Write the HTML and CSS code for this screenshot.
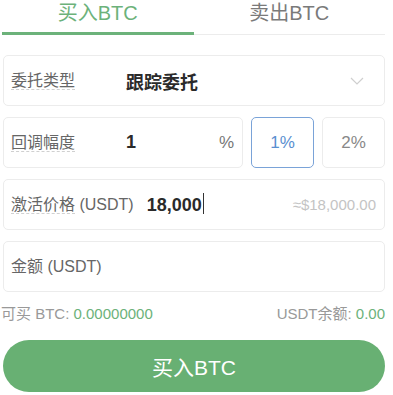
FILE: index.html
```html
<!DOCTYPE html>
<html>
<head>
    <title>跟踪委托 - 买入BTC</title>
    <link rel="stylesheet" href="styles.css">
</head>
<body>

    <div class="trade">
        <div class="tabs">
            <div class="tab active">买入BTC</div>
            <div class="tab">卖出BTC</div>
        </div>

        <div class="field select">
            <span class="label"><u>委托类型</u></span>
            <span class="value">跟踪委托</span>
            <svg class="chevron" width="14" height="8" viewBox="0 0 14 8">
                <path d="M1 1 L7 7 L13 1" fill="none" stroke="#cfcfcf" stroke-width="1.2"/>
            </svg>
        </div>

        <div class="row">
            <div class="field grow">
                <span class="label"><u>回调幅度</u></span>
                <span class="value">1</span>
                <span class="unit">%</span>
            </div>
            <div class="pct selected">1%</div>
            <div class="pct">2%</div>
        </div>

        <div class="field">
            <span class="label auto"><u>激活价格</u> (USDT)</span>
            <span class="value price">18,000<i class="cursor"></i></span>
            <span class="hint">≈$18,000.00</span>
        </div>

        <div class="field">
            <span class="label auto">金额 (USDT)</span>
        </div>

        <div class="info">
            <span>可买 BTC: <b>0.00000000</b></span>
            <span>USDT余额: <b>0.00</b></span>
        </div>

        <button class="buy-btn">买入BTC</button>
    </div>

</body>
</html>
```

FILE: styles.css
```css
body {
    margin: 0;
    padding: 0;
    background: #fff;
    font-family: "Liberation Sans", "Noto Sans CJK SC", sans-serif;
}
.trade {
    width: 382px;
    padding-left: 3px;
}
.tabs {
    display: flex;
    margin-left: -1px;
    height: 35px;
}
.tab {
    flex: 1;
    text-align: center;
    font-size: 20px;
    line-height: 26px;
    color: #7a7a7a;
    border-bottom: 1px solid #ececec;
    box-sizing: border-box;
}
.tab.active {
    color: #6cb27a;
    border-bottom: 3px solid #6cb27a;
}
.field {
    display: flex;
    align-items: center;
    height: 51px;
    margin-top: 11px;
    padding: 0 8px 0 7px;
    border: 1px solid #ececec;
    border-radius: 5px;
    box-sizing: border-box;
}
.select {
    margin-top: 20px;
}
.label {
    font-size: 16px;
    color: #666;
    width: 115px;
    line-height: 20px;
    flex: none;
}
.label.auto {
    width: auto;
}
.label u {
    text-decoration: none;
    border-bottom: 1px dashed #d0d0d0;
}
.value {
    font-size: 18px;
    font-weight: bold;
    color: #2a2a2a;
    flex: 1;
}
.chevron {
    margin-right: 12px;
}
.row {
    display: flex;
    gap: 8px;
    margin-top: 11px;
}
.row .field {
    margin-top: 0;
}
.grow {
    flex: 1;
}
.unit {
    font-size: 17px;
    color: #777;
}
.pct {
    width: 63px;
    height: 51px;
    line-height: 49px;
    text-align: center;
    font-size: 17px;
    color: #888;
    border: 1px solid #ececec;
    border-radius: 5px;
    box-sizing: border-box;
}
.pct.selected {
    color: #5a8fd0;
    border: 1px solid #7aa3d8;
}
.field .price {
    flex: 1;
    margin-left: 13px;
}
.cursor {
    display: inline-block;
    width: 1px;
    height: 21px;
    background: #333;
    vertical-align: -3px;
    margin-left: 1px;
}
.hint {
    font-size: 15px;
    color: #c4c4c4;
}
.info {
    display: flex;
    justify-content: space-between;
    margin-top: 10px;
    font-size: 15px;
    color: #999;
    margin-left: -2px;
}
.info b {
    font-weight: normal;
    color: #6cb27a;
}
.buy-btn {
    display: block;
    width: 100%;
    height: 52px;
    margin-top: 17px;
    border: none;
    border-radius: 26px;
    background: #68b073;
    color: #fff;
    font-size: 21px;
    font-family: inherit;
    cursor: pointer;
}
```
